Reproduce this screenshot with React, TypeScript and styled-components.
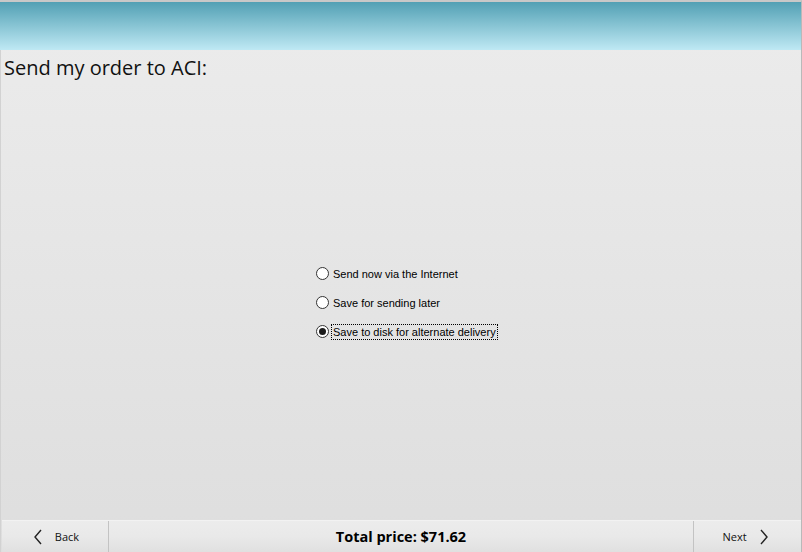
import { useState } from "react";
import styled, { createGlobalStyle } from "styled-components";

const GlobalStyle = createGlobalStyle`
    html, body {
        margin: 0;
        padding: 0;
        height: 100%;
        overflow: hidden;
    }
    #root {
        height: 100%;
    }
`;

const Window = styled.div`
    width: 802px;
    height: 552px;
    box-sizing: border-box;
    display: flex;
    flex-direction: column;
    border-top: 2px solid #c8c8c8;
    border-right: 1px solid #b9b9b9;
    background: linear-gradient(#ececec, #dedede);
    font-family: "Open Sans", "Noto Sans", sans-serif;
`;

const Banner = styled.div`
    height: 48px;
    flex-shrink: 0;
    background: linear-gradient(#52a0b4, #bfe9f4);
`;

const Body = styled.div`
    flex: 1;
    display: flex;
    flex-direction: column;
    border-left: 1px solid #d2d2d2;
`;

const Title = styled.h1`
    margin: 4px 0 0 3px;
    font-size: 20px;
    font-weight: 400;
    color: #111;
    line-height: 27px;
`;

const OptionList = styled.div`
    flex: 1;
    display: flex;
    flex-direction: column;
    justify-content: center;
    align-items: flex-start;
    gap: 12px;
    padding-left: 315px;
    padding-top: 4px;
`;

const Option = styled.label`
    display: flex;
    align-items: center;
    gap: 3px;
    height: 17px;
    cursor: default;
    font-family: "Liberation Sans", Arial, sans-serif;
    font-size: 11px;
    color: #000;
`;

const RadioCircle = styled.span<{ $checked: boolean }>`
    width: 11px;
    height: 11px;
    border: 1px solid #333;
    border-radius: 50%;
    background: #fff;
    display: flex;
    align-items: center;
    justify-content: center;

    &::after {
        content: "";
        width: 7px;
        height: 7px;
        border-radius: 50%;
        background: ${(p) => (p.$checked ? "#1a1a1a" : "transparent")};
    }
`;

const OptionText = styled.span<{ $focused: boolean }>`
    padding: 0 1px;
    outline: ${(p) => (p.$focused ? "1px dotted #000" : "none")};
    line-height: 14px;
`;

const Footer = styled.div`
    height: 31px;
    flex-shrink: 0;
    display: flex;
    border-top: 1px solid #f2f2f2;
    background: linear-gradient(#ececec 0%, #e9e9e9 50%, #e0e0e0 100%);
    margin-left: 1px;
`;

const NavButton = styled.button<{ $side: "left" | "right" }>`
    width: ${(p) => (p.$side === "left" ? "107px" : "108px")};
    border: none;
    ${(p) =>
        p.$side === "left"
            ? "border-right: 1px solid #c3c3c3;"
            : "border-left: 1px solid #c3c3c3;"}
    background: transparent;
    display: flex;
    align-items: center;
    justify-content: center;
    gap: 12px;
    padding: ${(p) => (p.$side === "left" ? "0 0 0 2px" : "0 4px 0 0")};
    font-family: "Open Sans", "Noto Sans", sans-serif;
    font-size: 11px;
    color: #111;
`;

const Price = styled.div`
    flex: 1;
    display: flex;
    align-items: center;
    justify-content: center;
    font-family: "Open Sans", "Noto Sans", sans-serif;
    font-weight: 700;
    font-size: 14.5px;
    color: #000;
`;

const Chevron = ({ dir }: { dir: "left" | "right" }) => (
    <svg width="10" height="16" viewBox="0 0 10 16">
        <path
            d={dir === "left" ? "M8 1 L2 8 L8 15" : "M2 1 L8 8 L2 15"}
            fill="none"
            stroke="#222"
            strokeWidth="1.4"
        />
    </svg>
);

const options = [
    "Send now via the Internet",
    "Save for sending later",
    "Save to disk for alternate delivery",
];

export default function App() {
    const [selected, setSelected] = useState(2);

    return (
        <>
            <GlobalStyle />
            <Window>
                <Banner />
                <Body>
                    <Title>Send my order to ACI:</Title>
                    <OptionList>
                        {options.map((text, i) => (
                            <Option key={text} onClick={() => setSelected(i)}>
                                <RadioCircle $checked={selected === i} />
                                <OptionText $focused={selected === i}>
                                    {text}
                                </OptionText>
                            </Option>
                        ))}
                    </OptionList>
                    <Footer>
                        <NavButton $side="left">
                            <Chevron dir="left" />
                            <span>Back</span>
                        </NavButton>
                        <Price>Total price: $71.62</Price>
                        <NavButton $side="right">
                            <span>Next</span>
                            <Chevron dir="right" />
                        </NavButton>
                    </Footer>
                </Body>
            </Window>
        </>
    );
}
